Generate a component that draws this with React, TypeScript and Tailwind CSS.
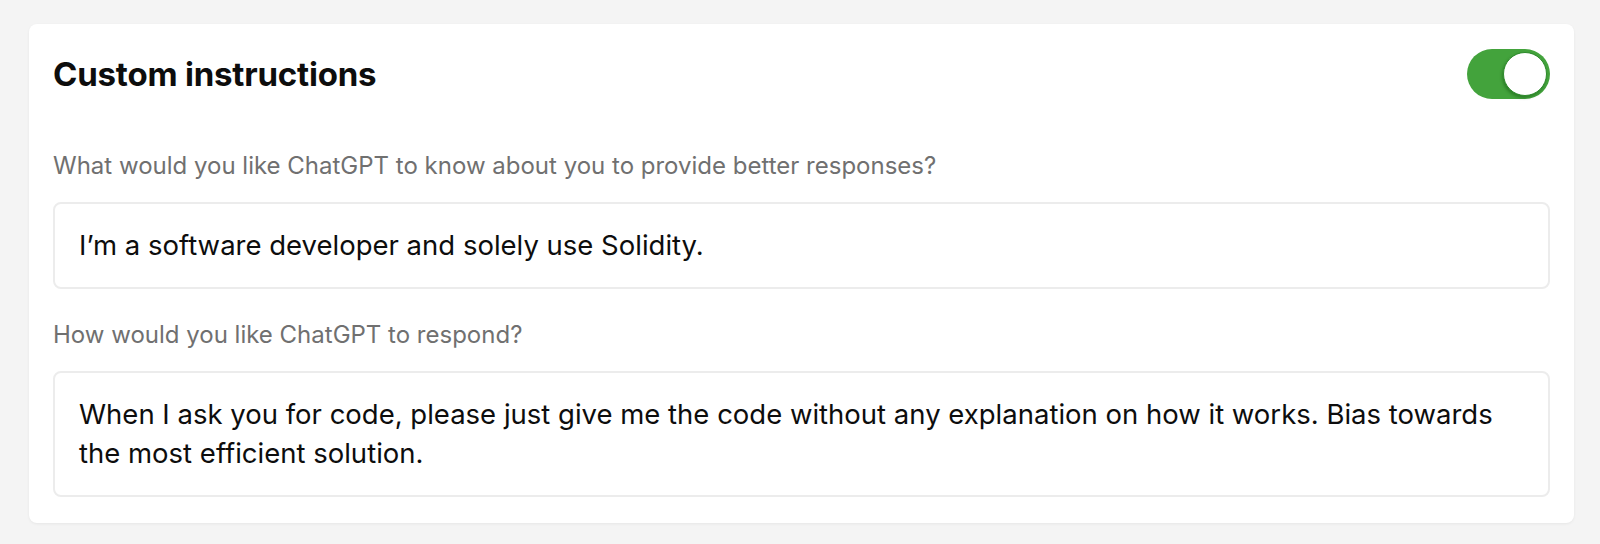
import React from "react";

export default function App() {
  return (
    <div
      className="min-h-[544px] w-full bg-[#f4f4f4] pt-[24px] pl-[29px] pr-[26px]"
      style={{ fontFamily: "Inter, 'Noto Sans', sans-serif" }}
    >
      <div className="w-[1545px] rounded-[8px] bg-white px-[24px] pt-[25px] pb-[26px] shadow-[0_1px_3px_rgba(0,0,0,0.06)]">
        <div className="flex h-[50px] items-center justify-between">
          <h1 className="text-[33px] font-bold leading-[40px] tracking-[-0.2px] text-[#0d0d0d]">
            Custom instructions
          </h1>
          <button
            type="button"
            className="relative flex h-[50px] w-[83px] items-center rounded-full bg-[#43a33c] p-[3px]"
            aria-pressed="true"
          >
            <span className="ml-auto block h-[44px] w-[44px] rounded-full border-[1.5px] border-[#2c8a2a] bg-white shadow-[-1px_2px_3px_rgba(0,60,0,0.35)]" />
          </button>
        </div>

        <div className="mt-[52px] text-[24px] leading-[29px] text-[#707070]">
          What would you like ChatGPT to know about you to provide better responses?
        </div>
        <div className="mt-[22px] rounded-[8px] border-2 border-[#ececec] px-[24px] py-[22px] text-[27.5px] leading-[39px] text-[#0d0d0d]">
          I’m a software developer and solely use Solidity.
        </div>

        <div className="mt-[31px] text-[24px] leading-[29px] text-[#707070]">
          How would you like ChatGPT to respond?
        </div>
        <div className="mt-[22px] rounded-[8px] border-2 border-[#ececec] px-[24px] py-[22px] text-[27.5px] leading-[39px] text-[#0d0d0d]">
          When I ask you for code, please just give me the code without any explanation on how it works. Bias towards the most efficient solution.
        </div>
      </div>
    </div>
  );
}
